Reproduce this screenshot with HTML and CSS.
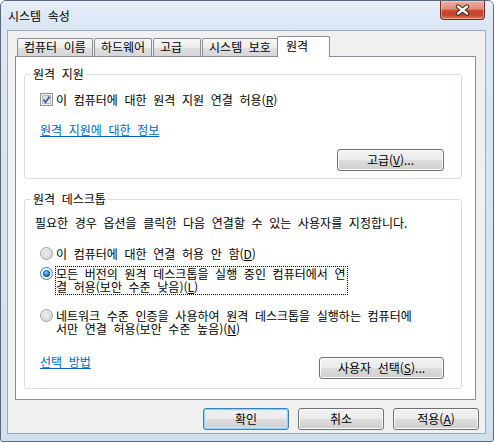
FILE: index.html
```html
<!DOCTYPE html>
<html lang="ko">
<head>
<meta charset="utf-8">
<title>시스템 속성</title>
<link rel="stylesheet" href="styles.css">
</head>
<body>
<div class="window">
  <div class="titlebar">
    <span class="title">시스템 속성</span>
    <div class="close">
      <svg width="15" height="12" viewBox="0 0 15 12">
        <path d="M3 2.5 L12 9.5 M12 2.5 L3 9.5" stroke="#3b1a14" stroke-width="4.4" stroke-linecap="round"/>
        <path d="M3 2.5 L12 9.5 M12 2.5 L3 9.5" stroke="#ffffff" stroke-width="2.4" stroke-linecap="round"/>
      </svg>
    </div>
  </div>
  <div class="frame">
    <div class="client">
      <div class="tabs">
        <div class="tab">컴퓨터 이름</div>
        <div class="tab">하드웨어</div>
        <div class="tab">고급</div>
        <div class="tab">시스템 보호</div>
        <div class="tab active">원격</div>
      </div>
      <div class="page">
        <fieldset class="group g1">
          <legend>원격 지원</legend>
          <div class="group-body body1">
            <div class="opt">
              <svg class="box" width="13" height="13" viewBox="0 0 13 13">
                <defs>
                  <linearGradient id="cbg" x1="0" y1="0" x2="1" y2="1">
                    <stop offset="0" stop-color="#cfd3d8"/>
                    <stop offset="1" stop-color="#f3f4f6"/>
                  </linearGradient>
                </defs>
                <rect x="0.5" y="0.5" width="12" height="12" fill="#f6f6f6" stroke="#8f8f8f"/>
                <rect x="2.5" y="2.5" width="8" height="8" fill="url(#cbg)" stroke="#b4b9bf"/>
                <path d="M3.6 6.6 L5.6 9.2 L9.6 3.6" stroke="#3f5b99" stroke-width="1.7" fill="none"/>
              </svg>
              <span class="lbl">이 컴퓨터에 대한 원격 지원 연결 허용(<u>R</u>)</span>
            </div>
            <a class="link info" href="#">원격 지원에 대한 정보</a>
            <div class="btn-row">
              <button class="btn btn-adv">고급(<u>V</u>)...</button>
            </div>
          </div>
        </fieldset>

        <fieldset class="group g2">
          <legend>원격 데스크톱</legend>
          <div class="group-body body2">
            <div class="intro">필요한 경우 옵션을 클릭한 다음 연결할 수 있는 사용자를 지정합니다.</div>
            <div class="opt r1">
              <svg class="radio" width="13" height="13" viewBox="0 0 13 13">
                <defs>
                  <radialGradient id="rg1" cx="0.4" cy="0.35" r="0.7">
                    <stop offset="0" stop-color="#fbfbfb"/>
                    <stop offset="1" stop-color="#d4d4d4"/>
                  </radialGradient>
                </defs>
                <circle cx="6.5" cy="6.5" r="6" fill="url(#rg1)" stroke="#a2a2a2"/>
                <circle cx="6.5" cy="6.5" r="3.5" fill="#e9e9e9" stroke="#d0d0d0" stroke-width="0.8"/>
              </svg>
              <span class="lbl">이 컴퓨터에 대한 연결 허용 안 함(<u>D</u>)</span>
            </div>
            <div class="opt r2">
              <svg class="radio" width="13" height="13" viewBox="0 0 13 13">
                <defs>
                  <radialGradient id="rg2" cx="0.45" cy="0.4" r="0.6">
                    <stop offset="0" stop-color="#8fdcff"/>
                    <stop offset="0.5" stop-color="#2a8ad6"/>
                    <stop offset="1" stop-color="#0b3f84"/>
                  </radialGradient>
                </defs>
                <circle cx="6.5" cy="6.5" r="6" fill="#e3f1fb" stroke="#3f7fb3"/>
                <circle cx="6.5" cy="6.5" r="4.6" fill="#ffffff"/>
                <circle cx="6.5" cy="6.5" r="3.6" fill="url(#rg2)"/>
              </svg>
              <span class="lbl focus">모든 버전의 원격 데스크톱을 실행 중인 컴퓨터에서 연<br>결 허용(보안 수준 낮음)(<u>L</u>)</span>
            </div>
            <div class="opt r3">
              <svg class="radio" width="13" height="13" viewBox="0 0 13 13">
                <defs>
                  <radialGradient id="rg3" cx="0.4" cy="0.35" r="0.7">
                    <stop offset="0" stop-color="#fbfbfb"/>
                    <stop offset="1" stop-color="#d4d4d4"/>
                  </radialGradient>
                </defs>
                <circle cx="6.5" cy="6.5" r="6" fill="url(#rg3)" stroke="#a2a2a2"/>
                <circle cx="6.5" cy="6.5" r="3.5" fill="#e9e9e9" stroke="#d0d0d0" stroke-width="0.8"/>
              </svg>
              <span class="lbl">네트워크 수준 인증을 사용하여 원격 데스크톱을 실행하는 컴퓨터에<br>서만 연결 허용(보안 수준 높음)(<u>N</u>)</span>
            </div>
            <div class="foot-row">
              <a class="link" href="#">선택 방법</a>
              <button class="btn btn-users">사용자 선택(<u>S</u>)...</button>
            </div>
          </div>
        </fieldset>
      </div>
      <div class="actions">
        <button class="btn btn-dlg default">확인</button>
        <button class="btn btn-dlg">취소</button>
        <button class="btn btn-dlg">적용(<u>A</u>)</button>
      </div>
    </div>
  </div>
</div>
</body>
</html>
```
FILE: styles.css
```css
html, body {
  margin: 0;
  padding: 0;
  background: #ffffff;
}

body {
  font-family: "Noto Sans CJK KR", "Noto Sans", sans-serif;
  font-size: 12px;
  line-height: 14px;
  word-spacing: 3.3px;
  color: #000;
}

.window {
  width: 494px;
  height: 442px;
  box-sizing: border-box;
  border: 1px solid #56667b;
  border-radius: 6px 6px 3px 3px;
  background: linear-gradient(#dde7f4, #d2dfee);
  display: flex;
  flex-direction: column;
  overflow: hidden;
}

.titlebar {
  height: 29px;
  flex: none;
  display: flex;
  justify-content: space-between;
  align-items: flex-start;
  padding: 0 8px 0 7px;
  background: linear-gradient(#e6eef8, #d9e5f3);
}

.title {
  margin-top: 8px;
  line-height: 14px;
}

.close {
  width: 45px;
  height: 19px;
  box-sizing: border-box;
  border: 1px solid #6c2c23;
  border-top: none;
  border-radius: 0 0 4px 4px;
  background: linear-gradient(#ecb2a4 0%, #e08b77 45%, #cb4b33 52%, #c6432b 78%, #dc7c63 100%);
  box-shadow: inset 0 0 0 1px rgba(255, 220, 210, 0.45);
  display: flex;
  align-items: center;
  justify-content: center;
}

.frame {
  flex: 1;
  display: flex;
  padding: 0 7px 7px 6px;
}

.client {
  flex: 1;
  border: 1px solid #9aabc0;
  background: #f0f0f0;
  display: flex;
  flex-direction: column;
  padding: 5px 0 3px 0;
}

/* tabs */
.tabs {
  display: flex;
  align-items: flex-end;
  height: 21px;
  margin: 0 9px -1px 9px;
  position: relative;
  z-index: 1;
}

.tab {
  height: 18px;
  box-sizing: border-box;
  min-width: 48px;
  margin: 0 1px 1px 0;
  padding: 0 6px 0 6px;
  border: 1px solid #898c95;
  border-bottom: none;
  border-radius: 2px 2px 0 0;
  background: linear-gradient(#f7f7f7, #ececec 50%, #e0e0e0 52%, #d6d6d6);
  line-height: 15px;
  white-space: nowrap;
}

.tab.active {
  height: 21px;
  min-width: 53px;
  margin: 0 0 0 -2px;
  padding: 0 8px;
  background: #ffffff;
  line-height: 18px;
}

.page {
  flex: 1;
  margin: 0 9px 0 7px;
  border: 1px solid #898c95;
  background: #ffffff;
  padding: 0 13px 0 8px;
  display: flex;
  flex-direction: column;
}

/* group boxes */
.group {
  margin: 0;
  padding: 0;
  border: 1px solid #d5dfe5;
  border-radius: 3px;
  min-width: 0;
}

.group legend {
  margin-left: 6px;
  padding: 0 2px;
  line-height: 14px;
}

.g1 {
  margin-top: 10px;
}

.g2 {
  margin-top: 13px;
}

.group-body {
  display: flex;
  flex-direction: column;
  align-items: flex-start;
}

.body1 {
  padding: 12px 17px 7px 15px;
}

.body2 {
  padding: 10px 17px 9px 10px;
}

.opt {
  display: flex;
  align-items: flex-start;
  gap: 3px;
  white-space: nowrap;
}

.body1 .opt .box {
  flex: none;
  margin-top: 0;
}

.body1 .opt .lbl {
  line-height: 13px;
}

.link {
  color: #0066cc;
  text-decoration: underline;
  line-height: 14px;
}

.info {
  margin-top: 17px;
}

.btn-row {
  align-self: stretch;
  display: flex;
  justify-content: flex-end;
  margin-top: 12px;
}

.intro {
  line-height: 14px;
  white-space: nowrap;
}

.body2 .opt {
  margin-left: 5px;
  gap: 2px;
}

.body2 .lbl {
  border: 1px solid transparent;
  line-height: 13px;
  padding-right: 1px;
}

.body2 .radio {
  flex: none;
  margin-top: 1px;
}

.r1 {
  margin-top: 16px;
}

.r2 {
  margin-top: 5px;
}

.r2 .radio {
  margin-top: 1px;
}

.body2 .lbl.focus {
  border: 1px dotted #000;
  padding-bottom: 1px;
}

.r3 {
  margin-top: 13px;
}

.foot-row {
  align-self: stretch;
  display: flex;
  justify-content: space-between;
  align-items: flex-start;
  margin-top: 19px;
  margin-left: 5px;
}

.foot-row .btn {
  margin-top: 2px;
}

/* buttons */
.btn {
  box-sizing: border-box;
  height: 22px;
  margin: 0;
  padding: 0;
  border: 1px solid #707070;
  border-radius: 3px;
  background: linear-gradient(#f2f2f2, #ebebeb 50%, #dddddd 51%, #cfcfcf);
  box-shadow: inset 0 0 0 1px #fcfcfc;
  font-family: inherit;
  font-size: 12px;
  line-height: 20px;
  word-spacing: inherit;
  color: #000;
  text-align: center;
  white-space: nowrap;
}

.btn-adv {
  width: 107px;
}

.btn-users {
  width: 125px;
}

.btn-dlg {
  width: 86px;
}

.btn.default {
  border-color: #3c7fb1;
  box-shadow: inset 0 0 0 1px #8fd4f4, inset 0 0 0 2px rgba(200, 236, 252, 0.6);
}

.actions {
  display: flex;
  justify-content: flex-end;
  gap: 9px;
  margin-top: 8px;
  padding-right: 6px;
}
```
